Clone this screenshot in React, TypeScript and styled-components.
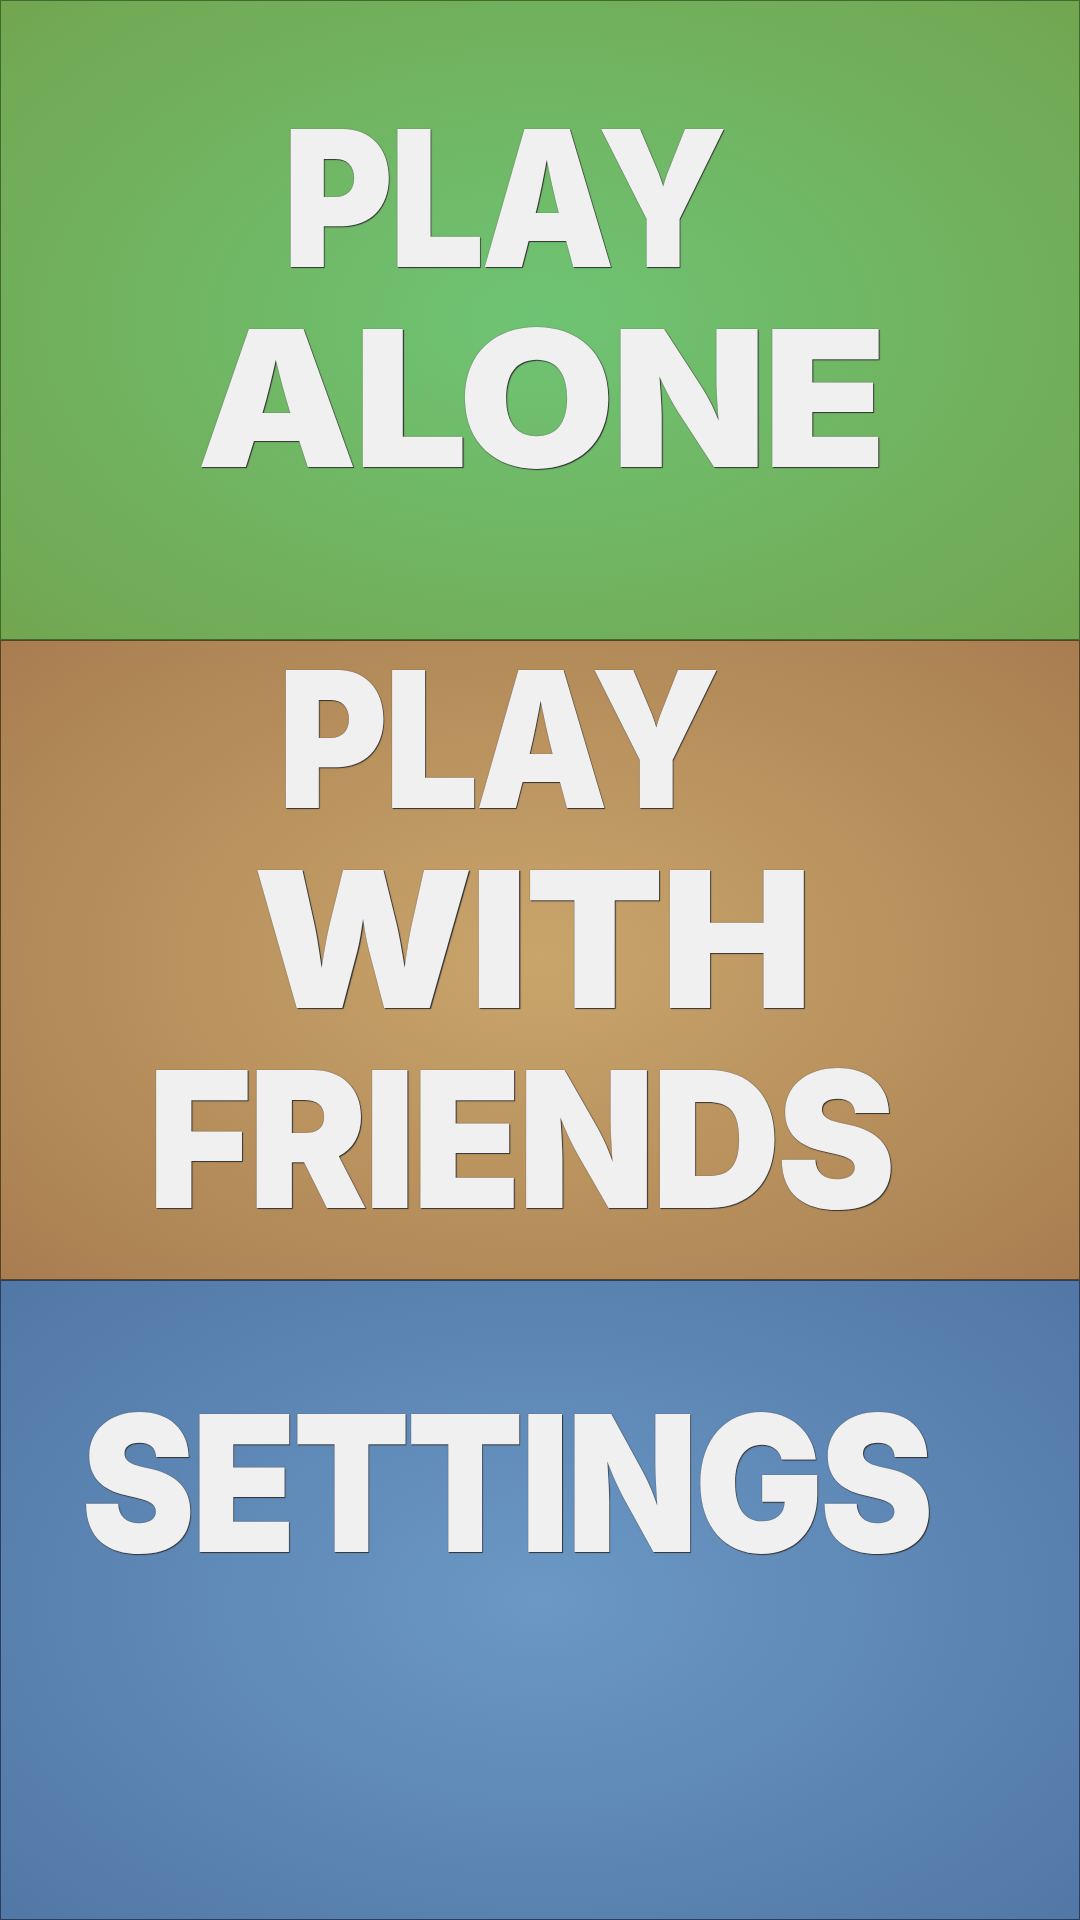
import React from "react";
import styled, { createGlobalStyle } from "styled-components";

const Global = createGlobalStyle`
  html, body { margin: 0; padding: 0; }
  body { width: 1080px; height: 1920px; overflow: hidden; font-family: Inter, "Noto Sans", sans-serif; }
`;

const Page = styled.div`
  display: flex;
  flex-direction: column;
  width: 1080px;
  height: 1920px;
`;

const Section = styled.button<{ $center: string; $edge: string; $border: string; $pad: number }>`
  all: unset;
  box-sizing: border-box;
  height: 640px;
  width: 1080px;
  display: flex;
  flex-direction: column;
  align-items: center;
  justify-content: center;
  padding-bottom: ${(p) => p.$pad}px;
  border: 1px solid ${(p) => p.$border};
  background: radial-gradient(ellipse 75% 80% at 50% 50%, ${(p) => p.$center} 0%, ${(p) => p.$edge} 100%);
  cursor: pointer;
`;

const Line = styled.div<{ $sx: number; $dx: number }>`
  font-family: Inter, "Noto Sans", sans-serif;
  font-weight: 900;
  font-size: 190px;
  line-height: 200px;
  color: #f0f0f0;
  letter-spacing: -4px;
  transform: translateX(${(p) => p.$dx}px) scaleX(${(p) => p.$sx});
  text-shadow: 0 0 1px #3a3a3a, 1px 1px 1px #333;
  white-space: nowrap;
`;

export default function App() {
  return (
    <Page>
      <Global />
      <Section $center="#6ec474" $edge="#73a34d" $border="#3f6a2a" $pad={44}>
        <Line $sx={0.885} $dx={-37}>PLAY</Line>
        <Line $sx={1.067} $dx={0}>ALONE</Line>
      </Section>
      <Section $center="#c9a56b" $edge="#a57a4e" $border="#5a4027" $pad={42}>
        <Line $sx={0.88} $dx={-43}>PLAY</Line>
        <Line $sx={1.074} $dx={-9}>WITH</Line>
        <Line $sx={0.94} $dx={-20}>FRIENDS</Line>
      </Section>
      <Section $center="#6b98c5" $edge="#4f74a3" $border="#2c3f5a" $pad={234}>
        <Line $sx={0.9} $dx={-34}>SETTINGS</Line>
      </Section>
    </Page>
  );
}
